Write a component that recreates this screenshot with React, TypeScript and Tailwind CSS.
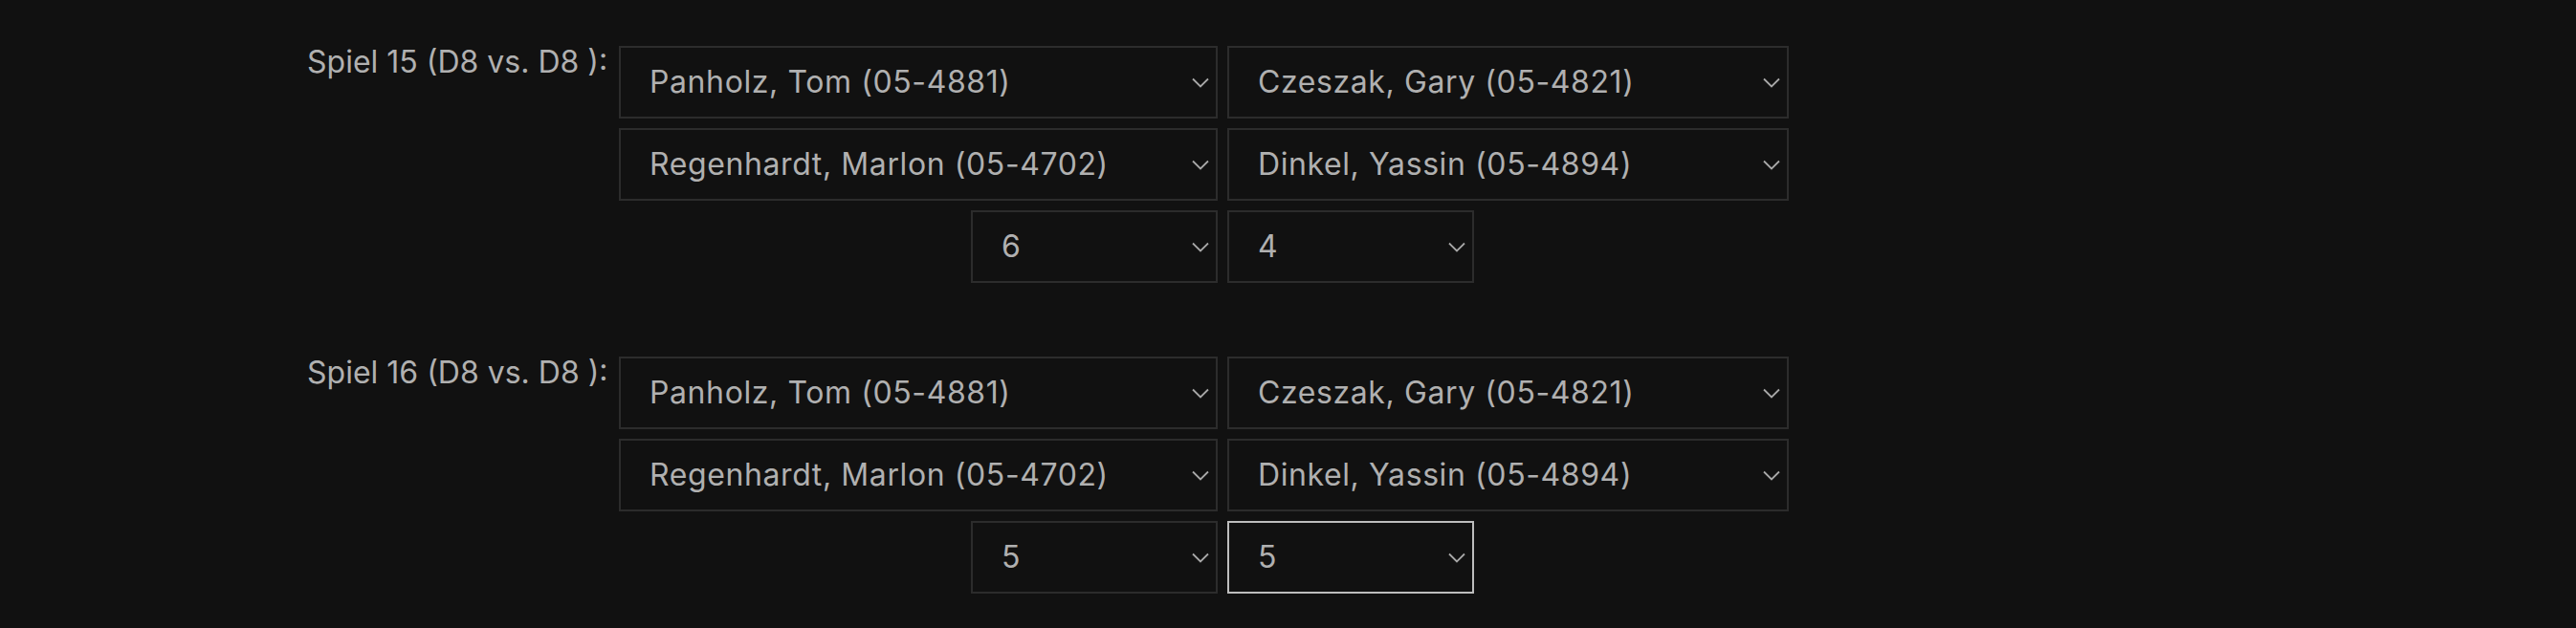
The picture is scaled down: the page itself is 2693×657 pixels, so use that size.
import React from 'react';

interface Game {
  nr: number;
  home: [string, string];
  guest: [string, string];
  score: [string, string];
  focused?: boolean;
}

const games: Game[] = [
  {
    nr: 15,
    home: ['Panholz, Tom (05-4881)', 'Regenhardt, Marlon (05-4702)'],
    guest: ['Czeszak, Gary (05-4821)', 'Dinkel, Yassin (05-4894)'],
    score: ['6', '4'],
  },
  {
    nr: 16,
    home: ['Panholz, Tom (05-4881)', 'Regenhardt, Marlon (05-4702)'],
    guest: ['Czeszak, Gary (05-4821)', 'Dinkel, Yassin (05-4894)'],
    score: ['5', '5'],
    focused: true,
  },
];

const Chevron = () => (
  <svg width="18" height="11" viewBox="0 0 18 11" fill="none" className="shrink-0">
    <path d="M1 1.5L9 9.5L17 1.5" stroke="#a8a8a8" strokeWidth="1.8" />
  </svg>
);

interface SelectProps {
  value: string;
  className?: string;
  focused?: boolean;
}

const FakeSelect: React.FC<SelectProps> = ({ value, className = '', focused }) => (
  <div
    className={`h-[76px] flex items-center justify-between pl-[30px] pr-[7px] bg-[#111111] border-2 ${
      focused ? 'border-[#bdbdbd]' : 'border-[#2c2c2c]'
    } ${className}`}
  >
    <span className="whitespace-nowrap tracking-[0.6px]">{value}</span>
    <Chevron />
  </div>
);

const GameRow: React.FC<{ game: Game }> = ({ game }) => (
  <div className="flex">
    <div className="w-[326px] leading-[34px] whitespace-nowrap">
      Spiel {game.nr} (D8 vs. D8 ):
    </div>
    <div className="grid grid-cols-[626px_587px] gap-x-[10px] gap-y-[10px]">
      <FakeSelect value={game.home[0]} />
      <FakeSelect value={game.guest[0]} />
      <FakeSelect value={game.home[1]} />
      <FakeSelect value={game.guest[1]} />
      <FakeSelect value={game.score[0]} className="w-[258px] justify-self-end" />
      <FakeSelect value={game.score[1]} className="w-[258px]" focused={game.focused} />
    </div>
  </div>
);

export default function App() {
  return (
    <div
      className="min-h-screen bg-[#111111] text-[#b0b0b0] text-[32px] pt-[48px] pl-[321px] flex flex-col gap-[77px]"
      style={{ fontFamily: 'Inter, "Noto Sans", sans-serif' }}
    >
      {games.map((g) => (
        <GameRow key={g.nr} game={g} />
      ))}
    </div>
  );
}
